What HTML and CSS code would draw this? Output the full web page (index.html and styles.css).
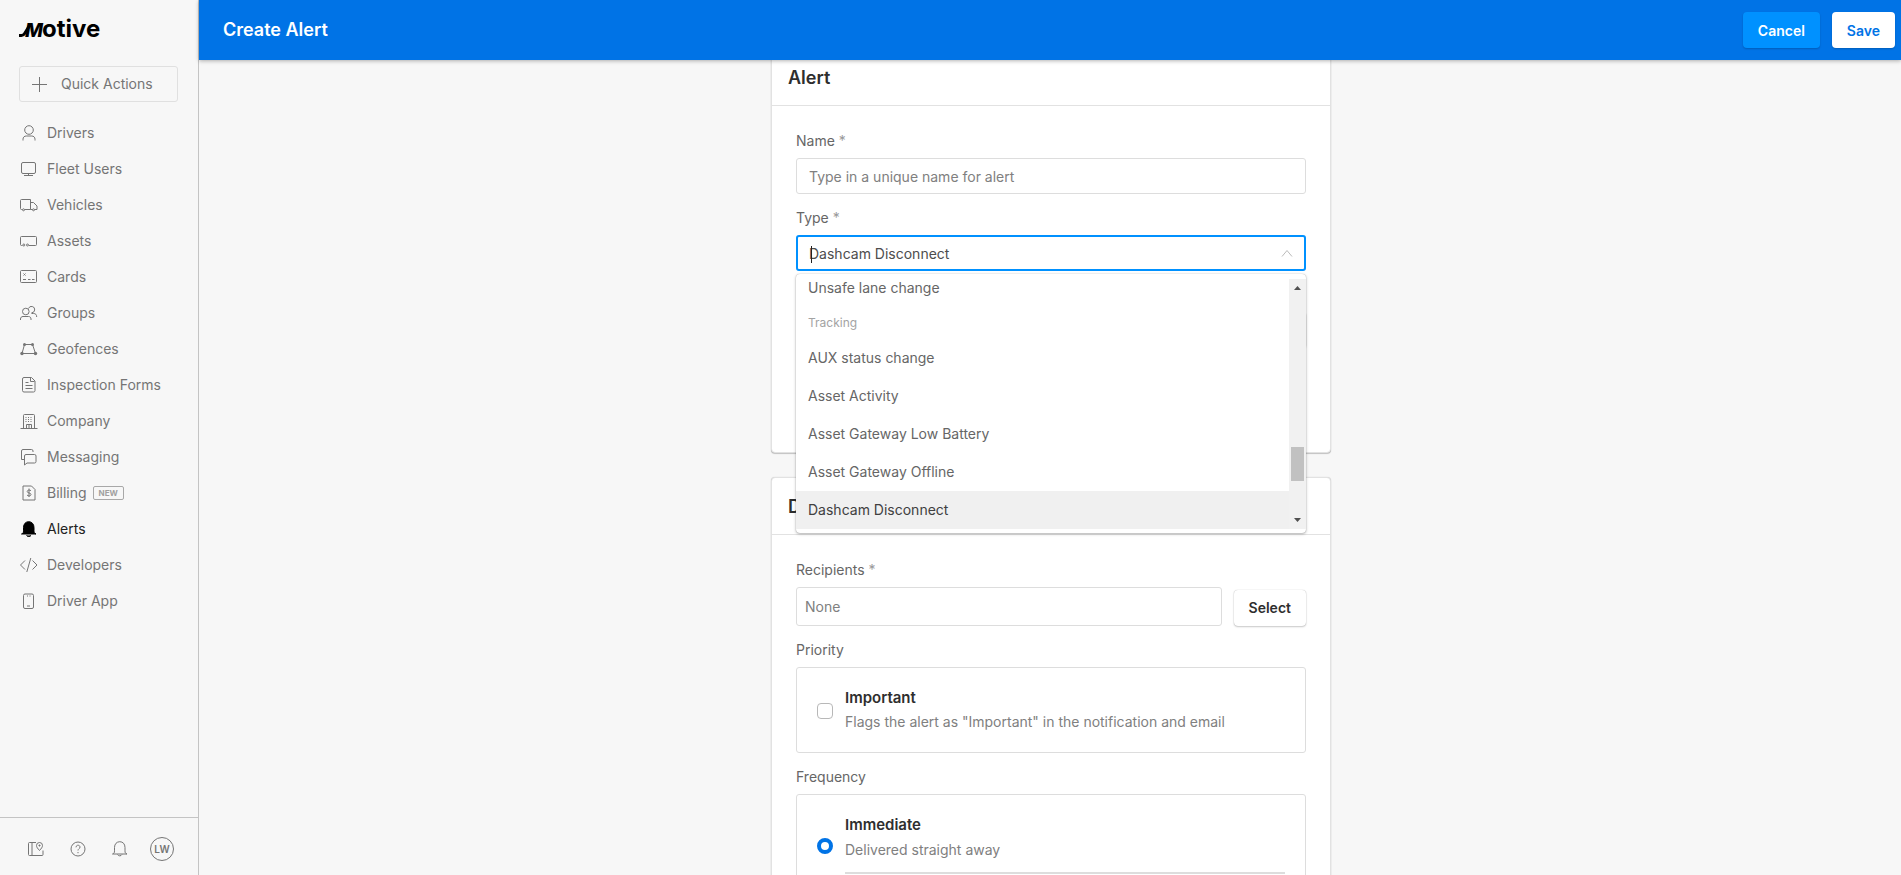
FILE: index.html
```html
<!DOCTYPE html>
<html lang="en">
<head>
    <meta charset="UTF-8">
    <title>Create Alert</title>
    <link rel="stylesheet" href="styles.css">
</head>
<body>

    <aside class="sidebar">
        <a href="#" class="logo" aria-label="Motive">
            <svg width="84" height="26" viewBox="0 0 84 26">
                <path d="M0 19.500h2.500c1.600 0 2.200-.6 3.100-2L11.500 8" fill="none" stroke="#000" stroke-width="3"/>
                <text class="logo-m" x="6" y="21">M</text>
                <text class="logo-word" x="23" y="21">otive</text>
            </svg>
        </a>

        <button type="button" class="quick">
            <svg width="16" height="16" viewBox="0 0 16 16"><path d="M8.500 1v15M1 8.500h15"/></svg>
            Quick Actions
        </button>

        <nav>
            <a href="#"><svg width="18" height="18" viewBox="0 0 18 18"><circle cx="9" cy="6" r="4.300"/><path d="M3 16.500v-1.300c0-2 1.500-3.200 3.200-3.200h5.600c1.700 0 3.200 1.200 3.200 3.200v1.300"/></svg>Drivers</a>
            <a href="#"><svg width="18" height="18" viewBox="0 0 18 18"><rect x="1.500" y="2.500" width="14" height="11" rx="1.500"/><path d="M8.500 13.500v2M4 15.500h9"/></svg>Fleet Users</a>
            <a href="#"><svg width="18" height="18" viewBox="0 0 18 18"><path d="M2.500 13.500h-1a1 1 0 0 1-1-1v-8a1 1 0 0 1 1-1h9v10h-6M10.500 6.500h3l3.500 3.500v3.500h-2.500M10.500 13.500h2"/><circle cx="3.500" cy="13.800" r="1"/><circle cx="13.500" cy="13.800" r="1"/></svg>Vehicles</a>
            <a href="#"><svg width="18" height="18" viewBox="0 0 18 18"><path d="M2.500 13.500h-1a1 1 0 0 1-1-1v-7a1 1 0 0 1 1-1h14a1 1 0 0 1 1 1v7a1 1 0 0 1-1 1H9"/><circle cx="3.800" cy="13" r="1"/><circle cx="7.500" cy="13" r="1"/></svg>Assets</a>
            <a href="#"><svg width="18" height="18" viewBox="0 0 18 18"><rect x=".5" y="2.500" width="16" height="12" rx="1"/><path d="M3 11.500h3M8 11.500h2.500M12 11.500h2.500M3.500 5.500l2 2M5.500 5.500l-2 2"/></svg>Cards</a>
            <a href="#"><svg width="18" height="18" viewBox="0 0 18 18"><circle cx="5.800" cy="7.500" r="3.300"/><path d="M.5 16v-1c0-1.500 1-2.500 2.500-2.500h5.500c1.500 0 2.500 1 2.500 2.500v1M8.500 4.500a3.200 3.200 0 1 1 3 4.300M11.500 9.500h2c2 0 3.200 1 3.200 3.500"/></svg>Groups</a>
            <a href="#"><svg width="18" height="18" viewBox="0 0 18 18"><path d="M4.500 4.500h8l3 9h-13.500z"/><g class="dots"><circle cx="4.500" cy="4.500" r="1.500"/><circle cx="12.500" cy="4.500" r="1.500"/><circle cx="2" cy="13.500" r="1.700"/><circle cx="15.500" cy="13.500" r="1.700"/></g></svg>Geofences</a>
            <a href="#"><svg width="18" height="18" viewBox="0 0 18 18"><path d="M4 1.500h7.500l3.500 3.500v9.500a1.500 1.500 0 0 1-1.500 1.500h-9.500a1.500 1.500 0 0 1-1.500-1.500v-11.500a1.500 1.500 0 0 1 1.500-1.500zM10.500 2v3.500h4M5.500 6.500h3M5.500 9.500h7M5.500 12.500h7"/></svg>Inspection Forms</a>
            <a href="#"><svg width="18" height="18" viewBox="0 0 18 18"><path d="M.5 16.500h17M3.500 16.500v-13a1 1 0 0 1 1-1h9a1 1 0 0 1 1 1v13M6.500 16.500v-4h5v4M9 12.500v4"/><path stroke-dasharray="1 1.500" d="M5.500 5.500h7M5.500 7.500h7M5.500 9.500h7"/></svg>Company</a>
            <a href="#"><svg width="18" height="18" viewBox="0 0 18 18"><path d="M4.500 11.500h-3v-8.500a1.500 1.500 0 0 1 1.500-1.500h8.500a1.500 1.500 0 0 1 1.500 1.500v1M6 6.500h8.500a1.500 1.500 0 0 1 1.500 1.500v5.500a1.500 1.500 0 0 1-1.500 1.500h-7.500l-2.500 2v-9a1.500 1.500 0 0 1 1.500-1.500z"/></svg>Messaging</a>
            <a href="#"><svg width="18" height="18" viewBox="0 0 18 18"><path d="M3 2h8.500l3.500 3.500v10.500h-12z"/><path d="M11 6.800c-.8-1.200-3.800-1-3.800.7 0 2 3.800 1 3.800 3 0 1.700-3 1.900-4 .5M9 4.500v8.500"/></svg>Billing <span class="badge">NEW</span></a>
            <a href="#" class="active"><svg width="18" height="18" viewBox="0 0 18 18"><path d="M1.500 14c1.700-.6 2-1.400 2-3.200v-3.300c0-3.500 2.200-5.800 5.200-5.800s5.300 2.300 5.300 5.800v3.300c0 1.800.3 2.600 2 3.200zM6.500 15.500c.8 1.300 3.600 1.300 4.500 0"/></svg>Alerts</a>
            <a href="#"><svg width="18" height="18" viewBox="0 0 18 18"><path d="M5 4.500l-4.500 4.500 4.500 4.500M12.500 4.500l4.500 4.500-4.500 4.500M10.800 2l-4 14"/></svg>Developers</a>
            <a href="#"><svg width="18" height="18" viewBox="0 0 18 18"><rect x="3.500" y="2" width="10" height="14.500" rx="1.500"/><path d="M7 4h1M9.500 4h1M7 14h3"/></svg>Driver App</a>
        </nav>

        <div class="sidebar-foot">
            <button type="button" aria-label="Guide"><svg width="18" height="18" viewBox="0 0 18 18"><path d="M9 2.500h-6.500a1 1 0 0 0-1 1v11a1 1 0 0 0 1 1h12.500a1 1 0 0 0 1-1v-4M5 2.500v13M12.500 10.500c-1.800-2-3-3.300-3-5a3 3 0 0 1 6 0c0 1.700-1.200 3-3 5zM11.500 5.500h2M12.500 4.500v2"/></svg></button>
            <button type="button" aria-label="Help"><svg width="18" height="18" viewBox="0 0 18 18"><circle cx="9" cy="9" r="7"/><path d="M7 7.300c0-2.700 4-2.700 4-.2 0 1.600-2 1.600-2 3.400M9 12v1.200"/></svg></button>
            <button type="button" aria-label="Notifications"><svg width="18" height="18" viewBox="0 0 18 18"><path d="M1.500 14c1.700-.6 2-1.400 2-3.200v-3.300c0-3.500 2.200-5.800 5.300-5.800s5.200 2.300 5.200 5.800v3.300c0 1.800.3 2.600 2 3.200zM6.500 14.500c.8 1.800 3.600 1.800 4.500 0"/></svg></button>
            <button type="button" class="avatar">LW</button>
        </div>
    </aside>

    <main>
        <header class="topbar">
            <h1>Create Alert</h1>
            <button type="button" class="btn btn-cancel">Cancel</button>
            <button type="button" class="btn btn-save">Save</button>
        </header>

        <form class="content">
            <section class="card">
                <h2>Alert</h2>
                <div class="card-body">
                    <label for="name">Name <i>*</i></label>
                    <input type="text" id="name" class="text" placeholder="Type in a unique name for alert">

                    <label for="type">Type <i>*</i></label>
                    <div class="combo">
                        <input type="text" id="type" class="text" role="combobox" aria-expanded="true" value="Dashcam Disconnect">
                        <span class="caret"></span>
                        <svg class="chevron" width="12" height="8" viewBox="0 0 12 8"><path d="M1 7.500l5-6 5 6"/></svg>

                        <div class="menu">
                            <ul role="listbox">
                                <li>Unsafe lane change</li>
                                <li class="group">Tracking</li>
                                <li>AUX status change</li>
                                <li>Asset Activity</li>
                                <li>Asset Gateway Low Battery</li>
                                <li>Asset Gateway Offline</li>
                                <li class="selected">Dashcam Disconnect</li>
                            </ul>
                            <div class="scrollbar">
                                <svg width="17" height="17" viewBox="0 0 17 17"><path d="M5 11l3.500-4 3.500 4z"/></svg>
                                <div class="thumb"></div>
                                <svg width="17" height="17" viewBox="0 0 17 17"><path d="M5 6l3.500 4 3.500-4z"/></svg>
                            </div>
                        </div>
                    </div>
                    <div class="behind"></div>
                </div>
            </section>

            <section class="card">
                <h2>Delivery</h2>
                <div class="card-body">
                    <label for="recipients">Recipients <i>*</i></label>
                    <div class="row">
                        <input type="text" id="recipients" class="text" placeholder="None">
                        <button type="button" class="btn btn-select">Select</button>
                    </div>

                    <p class="label">Priority</p>
                    <label class="option">
                        <input type="checkbox">
                        <span>
                            <b>Important</b>
                            <small>Flags the alert as "Important" in the notification and email</small>
                        </span>
                    </label>

                    <p class="label">Frequency</p>
                    <label class="option option-first">
                        <input type="radio" name="frequency" checked>
                        <span>
                            <b>Immediate</b>
                            <small>Delivered straight away</small>
                        </span>
                    </label>
                </div>
            </section>
        </form>
    </main>

</body>
</html>
```

FILE: styles.css
```css
*{
    box-sizing: border-box;
}
body{
    margin: 0;
    display: flex;
    height: 100vh;
    overflow: hidden;
    background-color: #f7f7f7;
    color: #757575;
    font-family: Inter, sans-serif;
    font-size: 14px;
    line-height: 20px;
}
button, input{
    font: inherit;
    color: inherit;
}
button{
    cursor: pointer;
}
a{
    color: inherit;
    text-decoration: none;
}

/* sidebar */
.sidebar{
    flex: none;
    width: 199px;
    display: flex;
    flex-direction: column;
    border-right: 1px solid #c4c4c4;
}
.sidebar svg{
    flex: none;
    fill: none;
    stroke: #757575;
}
.logo{
    height: 66px;
    padding: 16px 0 0 19px;
}
.logo text{
    fill: #000;
    stroke: none;
    font-weight: 700;
    font-size: 24px;
}
.logo .logo-m{
    font-style: italic;
    font-weight: 800;
    font-size: 19px;
}
.quick{
    display: flex;
    align-items: center;
    gap: 14px;
    height: 36px;
    margin: 0 20px 13px 19px;
    padding: 0 11px;
    border: 1px solid #e0e0e0;
    border-radius: 3px;
    background: none;
}
nav{
    flex: 1;
}
nav a{
    display: flex;
    align-items: center;
    height: 36px;
    padding-left: 20px;
}
nav svg{
    margin-right: 9px;
}
.sidebar .dots{
    fill: #757575;
    stroke: none;
}
nav a.active{
    color: #222;
}
nav a.active svg{
    fill: #000;
    stroke: #000;
}
.badge{
    margin-left: 6px;
    padding: 0 5px;
    border: 1px solid #a8a8a8;
    border-radius: 2px;
    color: #a0a0a0;
    font-size: 8px;
    font-weight: 700;
    line-height: 12px;
}
.sidebar-foot{
    display: flex;
    align-items: center;
    gap: 24px;
    height: 58px;
    padding: 4px 0 0 27px;
    border-top: 1px solid #c4c4c4;
}
.sidebar-foot button{
    display: flex;
    padding: 0;
    border: 0;
    background: none;
}
.sidebar-foot .avatar{
    justify-content: center;
    width: 24px;
    height: 24px;
    margin-left: -3px;
    border: 1px solid #757575;
    border-radius: 50%;
    font-size: 10px;
    font-weight: 600;
    line-height: 22px;
}

/* top bar */
main{
    flex: 1;
    min-width: 0;
}
.topbar{
    position: relative;
    z-index: 5;
    display: flex;
    align-items: center;
    gap: 12px;
    height: 60px;
    padding: 0 6px 0 24px;
    background-color: #0073e6;
    box-shadow: 0 1px 4px rgba(0,0,0,0.3);
}
h1{
    flex: 1;
    margin: 0;
    color: #fff;
    font-size: 18px;
    font-weight: 600;
}
.btn{
    height: 36px;
    padding: 2px 15px 0;
    border: 0;
    border-radius: 4px;
    font-weight: 600;
    box-shadow: 0 1px 2px rgba(0,0,0,0.2);
}
.btn-cancel{
    background-color: #0091ff;
    color: #fff;
}
.btn-save{
    background-color: #fff;
    color: #0073e6;
}

/* the form is scrolled a little under the top bar */
.content{
    width: 562px;
    margin: -12px auto 0;
    padding-left: 2px;
}
.card{
    margin-bottom: 24px;
    border: 1px solid #e2e2e2;
    border-radius: 4px;
    background-color: #fff;
    box-shadow: 0 0 1px rgba(0,0,0,0.2), 0 1px 1px rgba(0,0,0,0.2);
}
h2{
    margin: 0;
    padding: 19px 16px 17px;
    border-bottom: 1px solid #e2e2e2;
    color: #2e2e2e;
    font-size: 18px;
    font-weight: 600;
}
.card-body{
    padding: 25px 24px 24px;
}
.card-body > label:not(.option),
.label{
    display: block;
    margin: 0 0 7px;
    color: #666;
}
.card-body i{
    color: #999;
    font-style: normal;
}
.text{
    display: block;
    width: 100%;
    height: 36px;
    margin-bottom: 14px;
    padding: 0 12px;
    border: 1px solid #ddd;
    border-radius: 3px;
    background-color: #fff;
    outline: 0;
}
.text::placeholder{
    color: #808080;
    opacity: 1;
}

/* type drop-down */
.combo{
    position: relative;
}
.combo .text{
    padding: 0 11px;
    border: 2px solid #0091ff;
    color: #4d4d4d;
}
.caret{
    position: absolute;
    left: 15px;
    top: 11px;
    width: 1px;
    height: 17px;
    background-color: #222;
}
.chevron{
    position: absolute;
    right: 13px;
    top: 14px;
    fill: none;
    stroke: #bbb;
}
.menu{
    position: absolute;
    z-index: 2;
    top: 39px;
    left: 0;
    right: 0;
    display: flex;
    padding: 5px 0 4px;
    border-radius: 4px;
    background-color: #fff;
    box-shadow: 0 0 1px rgba(0,0,0,0.3), 0 1px 3px rgba(0,0,0,0.3);
}
.menu ul{
    flex: 1;
    display: flex;
    flex-direction: column;
    justify-content: flex-end;
    height: 250px;
    margin: 0;
    padding: 0;
    overflow: hidden;
    list-style: none;
}
.menu li{
    flex: none;
    padding: 9px 12px;
    color: #666;
}
.menu .group{
    padding: 6px 12px;
    color: #a3a3a3;
    font-size: 12px;
}
.menu .selected{
    background-color: #f0f0f0;
    color: #404040;
}
.scrollbar{
    display: flex;
    flex-direction: column;
    width: 17px;
    background-color: #f1f1f1;
}
.scrollbar svg{
    flex: none;
    fill: #505050;
}
.thumb{
    height: 34px;
    margin: 151px 2px auto;
    background-color: #c1c1c1;
}
.behind{
    width: 74px;
    height: 36px;
    margin: 41px 0 80px auto;
    border-radius: 4px;
    box-shadow: 0 0 1px rgba(0,0,0,0.3), 0 1px 2px rgba(0,0,0,0.2);
}

/* delivery */
.row{
    display: flex;
    align-items: flex-end;
    gap: 12px;
    margin-bottom: 14px;
}
.row .text{
    height: 39px;
    margin: 0;
    padding: 0 8px;
}
.btn-select{
    padding-top: 0;
    background-color: #fff;
    color: #2e2e2e;
    box-shadow: 0 0 1px rgba(0,0,0,0.3), 0 1px 2px rgba(0,0,0,0.2);
}
.option{
    display: flex;
    align-items: center;
    gap: 12px;
    height: 86px;
    margin-bottom: 14px;
    padding: 0 20px;
    border: 1px solid #ddd;
    border-radius: 3px;
}
.option input{
    appearance: none;
    flex: none;
    width: 16px;
    height: 16px;
    margin: 2px 0 0;
    border: 1px solid #b8b8b8;
    border-radius: 4px;
}
.option input[type=radio]{
    border: 4px solid #0073e6;
    border-radius: 50%;
}
.option span{
    flex: 1;
}
.option b,
.option small{
    display: block;
}
.option b{
    margin-bottom: 4px;
    color: #2e2e2e;
    font-size: 15px;
    font-weight: 600;
}
.option small{
    color: #808080;
    font-size: 14px;
}
.option-first{
    height: auto;
    padding: 20px;
}
.option-first b{
    margin-bottom: 5px;
}
.option-first span{
    padding-bottom: 12px;
    border-bottom: 2px solid #ddd;
}
```
